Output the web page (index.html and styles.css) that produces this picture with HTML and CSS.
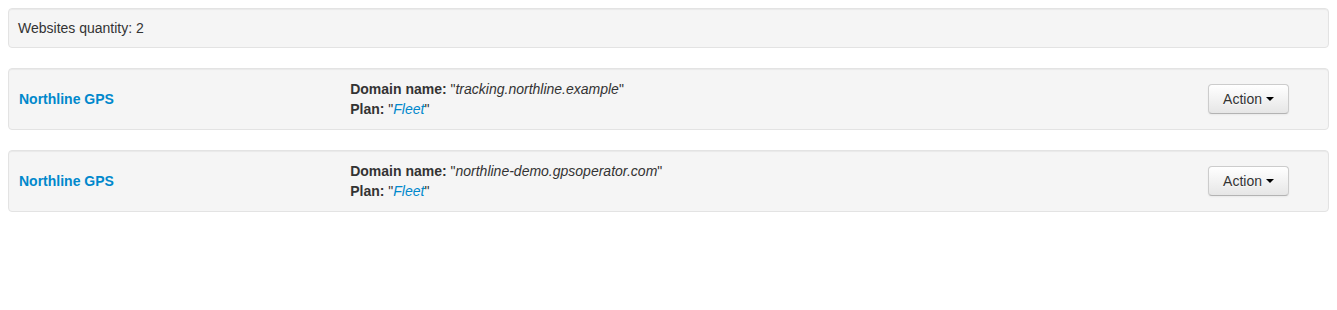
FILE: index.html
```html
<!DOCTYPE html>
<html>
<head>
<meta charset="utf-8">
<link rel="stylesheet" href="styles.css">
</head>
<body>
<div class="well summary">Websites quantity: 2</div>

<div class="well site">
  <div class="site-name"><a href="#">Northline GPS</a></div>
  <div class="site-details">
    <div><b>Domain name:</b> "<i>tracking.northline.example</i>"</div>
    <div><b>Plan:</b> "<a href="#" class="plan">Fleet</a>"</div>
  </div>
  <div class="site-actions">
    <button class="btn">Action <span class="caret"></span></button>
  </div>
</div>

<div class="well site">
  <div class="site-name"><a href="#">Northline GPS</a></div>
  <div class="site-details">
    <div><b>Domain name:</b> "<i>northline-demo.gpsoperator.com</i>"</div>
    <div><b>Plan:</b> "<a href="#" class="plan">Fleet</a>"</div>
  </div>
  <div class="site-actions">
    <button class="btn">Action <span class="caret"></span></button>
  </div>
</div>
</body>
</html>
```

FILE: styles.css
```css
body {
  margin: 8px;
  background: #fff;
  font-family: "Liberation Sans", Arial, sans-serif;
  font-size: 14px;
  line-height: 20px;
  color: #333;
}

a {
  color: #0088cc;
  text-decoration: none;
}

.well {
  background: #f5f5f5;
  border: 1px solid #e3e3e3;
  border-radius: 4px;
  box-shadow: inset 0 1px 1px rgba(0, 0, 0, 0.05);
  margin-bottom: 20px;
}

.summary {
  padding: 9px;
}

.site {
  padding: 10px 9px;
  display: grid;
  grid-template-columns: 23.404% 1fr auto;
  column-gap: 2.127%;
  align-items: center;
}

.site-name {
  padding-left: 1px;
}

.site-name a {
  font-weight: bold;
}

.site-details b {
  font-weight: bold;
}

.plan {
  font-style: italic;
}

.site-actions {
  padding-right: 30px;
}

.btn {
  display: inline-block;
  box-sizing: border-box;
  width: 81px;
  height: 30px;
  padding: 4px 12px;
  font-family: "Liberation Sans", Arial, sans-serif;
  font-size: 14px;
  line-height: 20px;
  color: #333;
  text-align: center;
  text-shadow: 0 1px 1px rgba(255, 255, 255, 0.75);
  background-color: #f5f5f5;
  background-image: linear-gradient(to bottom, #ffffff, #e6e6e6);
  border: 1px solid #cccccc;
  border-bottom-color: #b3b3b3;
  border-radius: 4px;
  box-shadow: inset 0 1px 0 rgba(255, 255, 255, 0.2), 0 1px 2px rgba(0, 0, 0, 0.05);
  cursor: pointer;
}

.caret {
  display: inline-block;
  width: 0;
  height: 0;
  vertical-align: top;
  margin-top: 8px;
  border-top: 4px solid #000;
  border-left: 4px solid transparent;
  border-right: 4px solid transparent;
}
```
